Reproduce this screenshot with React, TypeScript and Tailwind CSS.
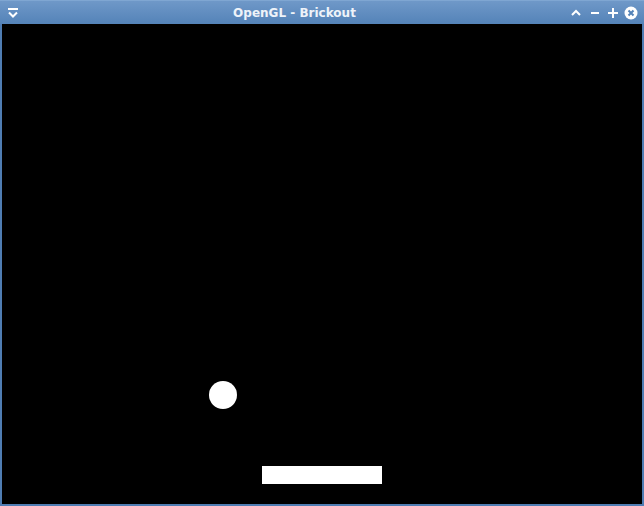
export default function App() {
  return (
    <div className="w-[644px] h-[506px] flex flex-col bg-[#4f7db3] overflow-hidden">
      {/* Title bar */}
      <div className="h-[24px] shrink-0 flex items-center bg-gradient-to-b from-[#6f98c8] to-[#5483b8] border-t border-[#7fa6d2]">
        <div className="w-[24px] h-full flex items-center justify-center pl-[1px]">
          <svg width="12" height="12" viewBox="0 0 12 12">
            <rect x="1" y="1" width="10" height="2" fill="#ffffff" />
            <path d="M2 5.5 L6 9.5 L10 5.5" stroke="#ffffff" strokeWidth="2" fill="none" />
          </svg>
        </div>
        <div
          className="flex-1 text-center text-[12px] font-bold text-[#eef3f9] leading-none pr-[6px]"
          style={{ fontFamily: '"DejaVu Sans", sans-serif' }}
        >
          OpenGL - Brickout
        </div>
        <div className="flex items-center pr-[6px]">
          <svg width="10" height="10" viewBox="0 0 10 10">
            <path d="M1 7 L5 3 L9 7" stroke="#ffffff" strokeWidth="2" fill="none" />
          </svg>
          <svg width="8" height="10" viewBox="0 0 8 10" className="ml-[10px]">
            <rect x="0" y="4" width="8" height="2" fill="#ffffff" />
          </svg>
          <svg width="10" height="10" viewBox="0 0 10 10" className="ml-[9px]">
            <rect x="0" y="4" width="10" height="2" fill="#ffffff" />
            <rect x="4" y="0" width="2" height="10" fill="#ffffff" />
          </svg>
          <svg width="14" height="14" viewBox="0 0 14 14" className="ml-[6px]">
            <circle cx="7" cy="7" r="6.5" fill="#ffffff" />
            <path d="M4.5 4.5 L9.5 9.5 M9.5 4.5 L4.5 9.5" stroke="#5483b8" strokeWidth="2" />
          </svg>
        </div>
      </div>
      {/* Game canvas */}
      <div className="flex-1 mx-[2px] mb-[2px] bg-black relative">
        <div className="absolute left-[207px] top-[357px] w-[28px] h-[28px] rounded-full bg-white" />
        <div className="absolute left-[260px] top-[442px] w-[120px] h-[18px] bg-white" />
      </div>
    </div>
  );
}
